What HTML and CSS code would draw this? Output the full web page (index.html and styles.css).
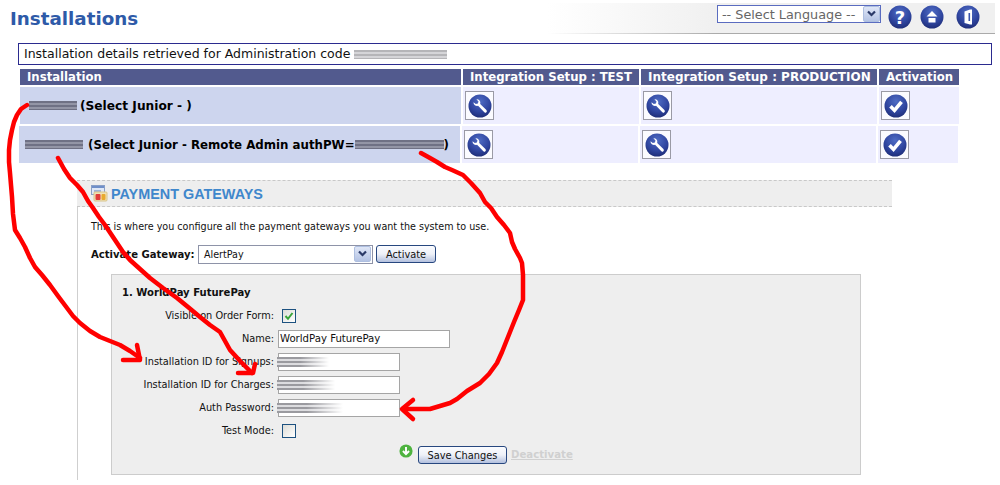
FILE: index.html
```html
<!DOCTYPE html>
<html lang="en">
<head>
<meta charset="utf-8">
<title>Installations</title>
<link rel="stylesheet" href="styles.css">
</head>
<body>
<svg class="defs" width="0" height="0" aria-hidden="true">
  <defs>
    <radialGradient id="ball" cx="50%" cy="30%" r="75%">
      <stop offset="0" stop-color="#4f6cc4"/>
      <stop offset="0.6" stop-color="#2f459f"/>
      <stop offset="1" stop-color="#1c2a72"/>
    </radialGradient>
    <symbol id="wrench" viewBox="0 0 24 24">
      <circle cx="12" cy="12" r="11.5" fill="url(#ball)"/>
      <path d="M5.5 8.2a3.6 3.6 0 0 0 4.6 3.6l6 6.3a1.5 1.5 0 0 0 2.3-2.2l-6.2-6a3.6 3.6 0 0 0-3.8-4.6l2.1 2.2-.6 2-2.1.6z" fill="#fff"/>
    </symbol>
    <symbol id="tick" viewBox="0 0 24 24">
      <circle cx="12" cy="12" r="11.5" fill="url(#ball)"/>
      <path d="M6.5 12.2l4 4.2 7-8.6" fill="none" stroke="#fff" stroke-width="3.6"/>
    </symbol>
    <symbol id="home" viewBox="0 0 24 24">
      <circle cx="12" cy="12" r="11.5" fill="url(#ball)"/>
      <path d="M12 6l5.5 5.5h-11z M8.500 13h7v4.500h-7z" fill="#fff"/>
    </symbol>
    <symbol id="door" viewBox="0 0 24 24">
      <circle cx="12" cy="12" r="11.5" fill="url(#ball)"/>
      <path d="M8.500 6.500L14 4.500h2v15h-2L8.500 18z" fill="#fff"/>
      <path d="M12.500 8h1.600v8h-1.600z" fill="#3a55ad"/>
    </symbol>
  </defs>
</svg>

<header class="topbar">
  <h1 class="page-title">Installations</h1>
  <div class="topbar-tools">
    <div class="select select-lang"><span class="select-text">-- Select Language --</span><span class="select-arrow"><svg width="11" height="8" viewBox="0 0 11 8"><path d="M2 1.5l3.5 3.5L9 1.5" fill="none" stroke="#2b3a68" stroke-width="2.2"/></svg></span></div>
    <svg class="tool-icon" width="24" height="24" viewBox="0 0 24 24"><circle cx="12" cy="12" r="11.5" fill="url(#ball)"/><text x="12" y="18.500" text-anchor="middle" class="help-mark">?</text></svg>
    <svg class="tool-icon" width="24" height="24"><use href="#home"/></svg>
    <svg class="tool-icon tool-icon-door" width="24" height="24"><use href="#door"/></svg>
  </div>
</header>

<div class="notice">Installation details retrieved for Administration code <span class="smear smear-code"></span></div>

<section class="installs">
  <div class="row row-head">
    <div class="cell">Installation</div>
    <div class="cell">Integration Setup : TEST</div>
    <div class="cell cell-wide">Integration Setup : PRODUCTION</div>
    <div class="cell">Activation</div>
  </div>
  <div class="row row-one">
    <div class="cell cell-name"><span class="smear smear-dark smear-a"></span>(Select Junior - )</div>
    <div class="cell cell-act"><span class="icon-box"><svg width="24" height="24"><use href="#wrench"/></svg></span></div>
    <div class="cell cell-act"><span class="icon-box"><svg width="24" height="24"><use href="#wrench"/></svg></span></div>
    <div class="cell cell-act"><span class="icon-box"><svg width="24" height="24"><use href="#tick"/></svg></span></div>
  </div>
  <div class="row row-two">
    <div class="cell cell-name"><span class="smear smear-dark smear-b"></span>(Select Junior - Remote Admin authPW=<span class="smear smear-dark smear-c"></span>)</div>
    <div class="cell cell-act"><span class="icon-box"><svg width="24" height="24"><use href="#wrench"/></svg></span></div>
    <div class="cell cell-act"><span class="icon-box"><svg width="24" height="24"><use href="#wrench"/></svg></span></div>
    <div class="cell cell-act"><span class="icon-box"><svg width="24" height="24"><use href="#tick"/></svg></span></div>
  </div>
</section>

<section class="panel">
  <div class="panel-head">
    <svg class="panel-icon" width="17" height="17" viewBox="0 0 17 17">
      <rect x="0.5" y="0.5" width="13" height="9" fill="#dfe8f7" stroke="#8aa0c8"/>
      <rect x="1" y="1" width="12" height="2" fill="#6f8fc9"/>
      <rect x="3" y="5" width="7" height="2" fill="#9fb3d8"/>
      <rect x="3" y="7" width="13" height="9" rx="1" fill="#f1e2b5" stroke="#d8c48a"/>
      <rect x="4.500" y="9" width="5" height="6" rx="1" fill="#e23b3b"/>
      <rect x="10.500" y="9" width="4" height="6" rx="1" fill="#e8a92f"/>
    </svg>
    <h2 class="panel-title">PAYMENT GATEWAYS</h2>
  </div>
  <div class="panel-body">
    <p class="intro">This is where you configure all the payment gateways you want the system to use.</p>
    <div class="activate-row">
      <strong class="activate-label">Activate Gateway:</strong>
      <div class="select select-gateway"><span class="select-text">AlertPay</span><span class="select-arrow"><svg width="11" height="8" viewBox="0 0 11 8"><path d="M2 1.5l3.5 3.5L9 1.5" fill="none" stroke="#2b3a68" stroke-width="2.2"/></svg></span></div>
      <button class="btn btn-activate" type="button">Activate</button>
    </div>
    <div class="gateway-box">
      <h3 class="gateway-title">1. WorldPay FuturePay</h3>
      <div class="form-grid">
        <label class="form-label">Visible on Order Form:</label>
        <span class="check"><svg width="12" height="12" viewBox="0 0 12 12"><path d="M2.500 6l2.500 2.800L9.500 3" fill="none" stroke="#3aa53a" stroke-width="2"/></svg></span>
        <label class="form-label">Name:</label>
        <input class="field field-name" type="text" value="WorldPay FuturePay">
        <label class="form-label">Installation ID for Signups:</label>
        <div class="field"><span class="smear smear-fade smear-d"></span></div>
        <label class="form-label">Installation ID for Charges:</label>
        <div class="field"><span class="smear smear-fade smear-e"></span></div>
        <label class="form-label">Auth Password:</label>
        <div class="field"><span class="smear smear-fade smear-f"></span></div>
        <label class="form-label">Test Mode:</label>
        <span class="check"></span>
      </div>
      <div class="save-row">
        <svg class="save-icon" width="14" height="14" viewBox="0 0 16 16"><circle cx="8" cy="8" r="7.500" fill="#4eb33f"/><path d="M8 3.500v8M4.500 8L8 11.500 11.500 8" fill="none" stroke="#fff" stroke-width="2.200"/></svg>
        <button class="btn btn-save" type="button">Save Changes</button>
        <a class="deactivate">Deactivate</a>
      </div>
    </div>
  </div>
</section>

<svg class="scribbles" width="1000" height="485" viewBox="0 0 1000 485" aria-hidden="true">
  <g class="ink">
    <path d="M27 105L21 109L17 115L14 122L12 130L10 140L9 150L9 162L10 173L11 185L12 197L13 214L15 230L20 238L25 247L30 258L35 267L42 275L50 285L58 296L67 308L73 316L80 323L90 331L100 337L110 341L120 345L130 351L140 358"/>
    <path d="M137 345L140 360L123 360"/>
    <path d="M58 158L64 169L70 178L77 185L83 192L88 201L93 208L99 217L105 225L111 234L117 243L123 252L130 260L140 269L150 278L163 288L177 298L188 307L200 317L210 325L220 332L225 341L230 350L241 362L252 373"/>
    <path d="M238 373L253 373L255 364"/>
    <path d="M421 153L430 158L437 162L445 167L452 170L463 175L471 183L480 193L485 202L491 208L497 217L504 225L510 233L512 242L515 249L520 258L522 263L523 275L523 300L519 310L514 322L510 332L506 342L502 352L497 363L489 374L480 383L467 391L457 399L450 403L440 406L430 409L403 409"/>
    <path d="M413 400L402 409L413 419"/>
  </g>
</svg>
</body>
</html>
```
FILE: styles.css
```css
* { box-sizing: border-box; }
html, body { margin: 0; padding: 0; background: #fff; }
body {
  position: relative;
  width: 1000px;
  height: 485px;
  overflow: hidden;
  font-family: "DejaVu Sans", Verdana, sans-serif;
  font-size: 12.5px;
  color: #000;
}
.defs { position: absolute; }

/* top bar */
.topbar {
  width: 995px;
  height: 31px;
  margin-top: 3px;
  display: flex;
  justify-content: space-between;
  align-items: flex-start;
  background: linear-gradient(90deg, #fff 55%, #f0f0f0 72%);
  border-bottom: 1px solid;
  border-image: linear-gradient(90deg, #fff 55%, #aaa 72%) 1;
}
.page-title {
  margin: 5px 0 0 10px;
  font-size: 18.3px;
  line-height: 22px;
  font-weight: bold;
  color: #2e5aa8;
}
.topbar-tools {
  display: flex;
  align-items: flex-start;
  padding: 2px 15px 0 0;
}
.tool-icon { margin-left: 8px; margin-top: 0; }
.tool-icon-door { margin-left: 12px; }
.help-mark {
  font-family: "DejaVu Sans", sans-serif;
  font-size: 18px;
  font-weight: bold;
  fill: #fff;
}

/* select look-alike */
.select {
  display: flex;
  align-items: center;
  justify-content: space-between;
  background: #fff;
}
.select-lang {
  width: 164px;
  height: 18px;
  margin-right: -1px;
  border: 1px solid #5a6cc0;
  color: #666;
  font-size: 12.8px;
  padding-left: 4px;
}
.select-arrow {
  display: flex;
  align-items: center;
  justify-content: center;
  width: 17px;
  height: 16px;
  background: linear-gradient(#dfe6f7, #b4c3e4);
  border: 1px solid #aebfe0;
  border-radius: 2px;
}

/* notice */
.notice {
  width: 974px;
  height: 22px;
  margin: 9px 0 0 18px;
  padding-left: 5px;
  border: 1px solid #2b2b8f;
  line-height: 20px;
  display: flex;
  align-items: center;
  gap: 4px;
  color: #111;
}

/* redaction smears */
.smear { display: block; flex: none; filter: blur(0.6px); }
.smear-code {
  width: 93px;
  height: 9px;
  background: repeating-linear-gradient(#b5b5b8 0 2px, #d5d5d8 2px 4px);
}
.smear-dark { background: repeating-linear-gradient(#6f7185 0 2px, #9395a6 2px 4px); height: 9px; }
.smear-a { width: 48px; margin: 0 3px 0 9px; }
.smear-b { width: 58px; margin: 0 5px 0 6px; }
.smear-c { width: 89px; margin-left: 0; }
.smear-fade {
  height: 10px;
  margin-left: -2px;
  background:
    linear-gradient(90deg, rgba(255,255,255,0) 45%, #fff 100%),
    repeating-linear-gradient(#9a9a9f 0 2px, #dcdcdf 2px 4px);
}
.smear-d { width: 52px; }
.smear-e { width: 58px; }
.smear-f { width: 66px; }

/* installs table */
.installs { margin: 4px 0 0 20px; display: flex; flex-direction: column; gap: 2px; width: 939px; }
.row {
  display: grid;
  grid-template-columns: 441px 176px 236px 80px;
  gap: 2px;
}
.row-two { margin-left: -1px; }
.row-head .cell {
  height: 16px;
  line-height: 16px;
  padding-left: 7px;
  background: #525a8e;
  color: #fff;
  font-weight: bold;
  font-size: 11.7px;
  white-space: nowrap;
}
.row-head .cell-wide { font-size: 12px; }
.cell-name {
  height: 37px;
  display: flex;
  align-items: center;
  background: #cdd5ee;
  font-weight: bold;
  font-size: 11.8px;
  white-space: nowrap;
}
.row-one .cell-name { font-size: 12.2px; }
.cell-act {
  height: 37px;
  display: flex;
  align-items: center;
  padding-left: 2px;
  background: #eeeeff;
}
.icon-box {
  width: 29px;
  height: 29px;
  display: flex;
  align-items: center;
  justify-content: center;
  background: #fbfbff;
  border: 1px solid #9a9aa5;
}

/* panel */
.panel { width: 815px; margin: 17px 0 0 77px; height: 300px; }
.panel-head {
  height: 27px;
  display: flex;
  align-items: center;
  padding-left: 14px;
  gap: 3px;
  background: #eeeeee;
  border-top: 1px dashed #c8c8c8;
  border-bottom: 1px dashed #c8c8c8;
}
.panel-title {
  margin: 0;
  font-family: "Liberation Sans", Arial, sans-serif;
  font-size: 14.4px;
  font-weight: bold;
  color: #3f87cc;
}
.panel-body {
  height: 273px;
  padding: 13px 0 0 13px;
  border-left: 1px solid #cfcfcf;
  font-family: "DejaVu Sans Condensed", "DejaVu Sans", sans-serif;
  font-size: 10.65px;
  color: #111;
}
.intro { margin: 0; line-height: 14px; }
.activate-row {
  display: flex;
  align-items: center;
  height: 20px;
  margin-top: 10px;
}
.activate-label { font-weight: bold; font-size: 11.2px; width: 107px; flex: none; white-space: nowrap; }
.select-gateway {
  width: 175px;
  height: 19px;
  border: 1px solid #8e93a8;
  padding-left: 5px;
  padding-right: 1px;
}
.btn {
  font-family: "DejaVu Sans Condensed", "DejaVu Sans", sans-serif;
  font-size: 10.9px;
  color: #111;
  padding: 0;
  border: 1px solid #27477f;
  border-radius: 3px;
  background: linear-gradient(#fbfcff 0%, #eef1f8 50%, #b3c0de 100%);
}
.btn-activate { width: 60px; height: 18px; margin-left: 3px; }
.gateway-box {
  width: 750px;
  height: 201px;
  margin: 10px 0 0 20px;
  padding: 11px 0 0 10px;
  background: #eeeeee;
  border: 1px solid #cccccc;
}
.gateway-title { margin: 0; font-size: 11.2px; line-height: 14px; font-weight: bold; }
.form-grid {
  display: grid;
  grid-template-columns: 152px 1fr;
  grid-auto-rows: 23px;
  column-gap: 4px;
  align-items: center;
  margin-top: 4px;
}
.form-label { text-align: right; white-space: nowrap; font-size: 10.85px; }
.field {
  display: flex;
  align-items: center;
  width: 122px;
  height: 18px;
  background: #fff;
  border: 1px solid #a5a5a5;
}
input.field {
  font-family: "DejaVu Sans Condensed", "DejaVu Sans", sans-serif;
  font-size: 11.3px;
  color: #111;
  padding: 0 0 0 1px;
  outline: none;
}
input.field-name { width: 172px; }
.check {
  display: flex;
  align-items: center;
  justify-content: center;
  width: 14px;
  height: 14px;
  margin-left: 4px;
  border: 1px solid #1c5180;
  background: linear-gradient(135deg, #dcdcd7, #fff);
}
.save-row {
  display: flex;
  align-items: flex-start;
  margin: 4px 0 0 277px;
}
.save-icon { margin-top: -2px; flex: none; }
.btn-save { width: 89px; height: 18px; margin-left: 5px; }
.deactivate {
  margin: 2px 0 0 4px;
  font-size: 11.3px;
  font-weight: bold;
  color: #d0d0d0;
  text-decoration: underline;
}

/* hand-drawn arrows over the screenshot */
.scribbles { position: absolute; left: 0; top: 0; pointer-events: none; }
.ink path {
  fill: none;
  stroke: #f00;
  stroke-width: 4.5;
  stroke-linejoin: round;
  stroke-linecap: round;
}
```
